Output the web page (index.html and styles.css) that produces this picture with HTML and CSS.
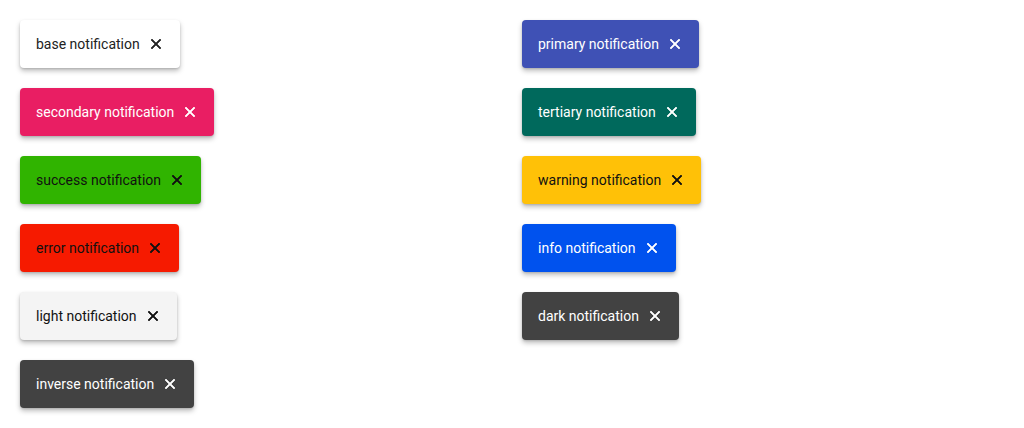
FILE: index.html
```html
<!DOCTYPE html>
<html>
<head>
<meta charset="utf-8">
<link rel="stylesheet" href="styles.css">
</head>
<body>
<div class="page">
  <div class="col">
    <div class="note base"><span>base notification</span><svg class="x" viewBox="5 5 14 14"><path d="M19 6.41L17.59 5 12 10.59 6.41 5 5 6.41 10.59 12 5 17.59 6.41 19 12 13.41 17.59 19 19 17.59 13.41 12z"/></svg></div>
    <div class="note secondary"><span>secondary notification</span><svg class="x" viewBox="5 5 14 14"><path d="M19 6.41L17.59 5 12 10.59 6.41 5 5 6.41 10.59 12 5 17.59 6.41 19 12 13.41 17.59 19 19 17.59 13.41 12z"/></svg></div>
    <div class="note success"><span>success notification</span><svg class="x" viewBox="5 5 14 14"><path d="M19 6.41L17.59 5 12 10.59 6.41 5 5 6.41 10.59 12 5 17.59 6.41 19 12 13.41 17.59 19 19 17.59 13.41 12z"/></svg></div>
    <div class="note error"><span>error notification</span><svg class="x" viewBox="5 5 14 14"><path d="M19 6.41L17.59 5 12 10.59 6.41 5 5 6.41 10.59 12 5 17.59 6.41 19 12 13.41 17.59 19 19 17.59 13.41 12z"/></svg></div>
    <div class="note light"><span>light notification</span><svg class="x" viewBox="5 5 14 14"><path d="M19 6.41L17.59 5 12 10.59 6.41 5 5 6.41 10.59 12 5 17.59 6.41 19 12 13.41 17.59 19 19 17.59 13.41 12z"/></svg></div>
    <div class="note inverse"><span>inverse notification</span><svg class="x" viewBox="5 5 14 14"><path d="M19 6.41L17.59 5 12 10.59 6.41 5 5 6.41 10.59 12 5 17.59 6.41 19 12 13.41 17.59 19 19 17.59 13.41 12z"/></svg></div>
  </div>
  <div class="col">
    <div class="note primary"><span>primary notification</span><svg class="x" viewBox="5 5 14 14"><path d="M19 6.41L17.59 5 12 10.59 6.41 5 5 6.41 10.59 12 5 17.59 6.41 19 12 13.41 17.59 19 19 17.59 13.41 12z"/></svg></div>
    <div class="note tertiary"><span>tertiary notification</span><svg class="x" viewBox="5 5 14 14"><path d="M19 6.41L17.59 5 12 10.59 6.41 5 5 6.41 10.59 12 5 17.59 6.41 19 12 13.41 17.59 19 19 17.59 13.41 12z"/></svg></div>
    <div class="note warning"><span>warning notification</span><svg class="x" viewBox="5 5 14 14"><path d="M19 6.41L17.59 5 12 10.59 6.41 5 5 6.41 10.59 12 5 17.59 6.41 19 12 13.41 17.59 19 19 17.59 13.41 12z"/></svg></div>
    <div class="note info"><span>info notification</span><svg class="x" viewBox="5 5 14 14"><path d="M19 6.41L17.59 5 12 10.59 6.41 5 5 6.41 10.59 12 5 17.59 6.41 19 12 13.41 17.59 19 19 17.59 13.41 12z"/></svg></div>
    <div class="note dark"><span>dark notification</span><svg class="x" viewBox="5 5 14 14"><path d="M19 6.41L17.59 5 12 10.59 6.41 5 5 6.41 10.59 12 5 17.59 6.41 19 12 13.41 17.59 19 19 17.59 13.41 12z"/></svg></div>
  </div>
</div>
</body>
</html>
```
FILE: styles.css
```css
html, body {
  margin: 0;
  background: #fff;
}
body {
  font-family: Roboto, "Liberation Sans", sans-serif;
  font-size: 14px;
}
.page {
  display: grid;
  grid-template-columns: 1fr 1fr;
  column-gap: 20px;
  padding: 20px;
}
.col {
  display: flex;
  flex-direction: column;
  align-items: flex-start;
  gap: 20px;
}
.note {
  display: flex;
  align-items: center;
  height: 48px;
  box-sizing: border-box;
  padding: 0 19px 0 16px;
  border-radius: 4px;
  box-shadow: 0 3px 5px rgba(0,0,0,0.25), 0 1px 2px rgba(0,0,0,0.12);
  color: #fff;
  letter-spacing: 0;
}
.note .x {
  width: 10px;
  height: 10px;
  margin-left: 11px;
  fill: currentColor;
  stroke: currentColor;
  stroke-width: 0.9;
}
.base { background: #fff; color: #222; }
.secondary { background: #e91e63; }
.success { background: #30b400; color: #111; }
.error { background: #f61a00; color: #111; }
.light { background: #f4f4f4; color: #111; }
.inverse { background: #424242; }
.primary { background: #3f51b5; }
.tertiary { background: #00695c; }
.warning { background: #ffc107; color: #111; }
.info { background: #0052ee; }
.dark { background: #424242; }
```
